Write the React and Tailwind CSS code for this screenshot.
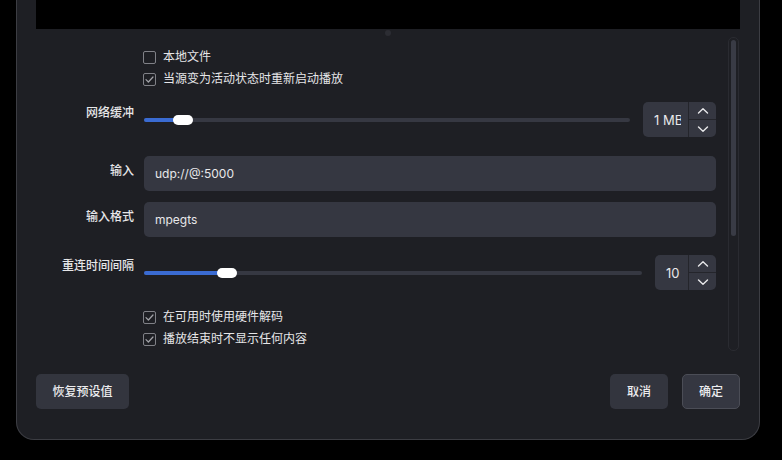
import React from 'react'

const font = { fontFamily: '"Inter", "Noto Sans CJK SC", sans-serif' }

const CheckRow = ({ checked, label }) => (
  <div className="h-[22px] flex items-center pl-[107px]">
    <div className="w-[13px] h-[13px] rounded-[2px] border border-[#808187] flex items-center justify-center">
      {checked && (
        <svg width="11" height="11" viewBox="0 0 11 11" fill="none">
          <path d="M2 5.6 L4.4 8 L9 3" stroke="#a3a4a9" strokeWidth="1.2" strokeLinecap="round" strokeLinejoin="round" />
        </svg>
      )}
    </div>
    <span className="ml-[7px] text-[12px] leading-[16px] text-[#e6e6e8]">{label}</span>
  </div>
)

const Chevron = ({ up }) => (
  <svg width="12" height="8" viewBox="0 0 12 8" fill="none">
    <path d={up ? 'M1.5 6 L6 1.8 L10.5 6' : 'M1.5 2 L6 6.2 L10.5 2'} stroke="#e8e8ea" strokeWidth="1.4" strokeLinecap="round" strokeLinejoin="round" />
  </svg>
)

const SpinBox = ({ value, width }) => (
  <div className={`${width} h-[35px] rounded-[5px] bg-[#353741] flex shrink-0`}>
    <div className="flex-1 flex items-center pl-[11px] pr-[7px] overflow-hidden">
      <div className="overflow-hidden whitespace-nowrap text-[13px] leading-[16px] text-[#e8e8ea]">{value}</div>
    </div>
    <div className="w-[28px] flex flex-col border-l border-[#24252b]">
      <div className="flex-1 flex items-center justify-center border-b border-[#24252b]"><Chevron up /></div>
      <div className="flex-1 flex items-center justify-center"><Chevron /></div>
    </div>
  </div>
)

const SliderRow = ({ label, thumb, spin, spinWidth }) => (
  <div className="flex h-[35px]">
    <div className="w-[98px] pt-[3px] text-right text-[12px] leading-[16px] text-[#e6e6e8] font-medium">{label}</div>
    <div className="ml-[10px] flex-1 flex items-center gap-[13px]">
      <div className="relative flex-1 h-[4px] rounded-full bg-[#363842]">
        <div className="absolute left-0 top-0 h-[4px] rounded-full bg-[#3a6bd2]" style={{ width: thumb + 10 }} />
        <div className="absolute top-[-3px] w-[20px] h-[10px] rounded-full bg-white" style={{ left: thumb }} />
      </div>
      <SpinBox value={spin} width={spinWidth} />
    </div>
  </div>
)

const InputRow = ({ label, value }) => (
  <div className="flex h-[35px]">
    <div className="w-[98px] pt-[7px] text-right text-[12px] leading-[16px] text-[#e6e6e8] font-medium">{label}</div>
    <div className="ml-[10px] flex-1 rounded-[5px] bg-[#353741] flex items-center px-[11px] text-[12px] text-[#e8e8ea]">{value}</div>
  </div>
)

export default function App() {
  return (
    <div className="w-[782px] h-[460px] bg-black overflow-hidden" style={font}>
      <div className="ml-4 w-[744px] h-[440px] bg-[#1e1f24] border-x border-b border-[#3c3d43] rounded-b-[18px] px-[19px] flex flex-col">
        {/* preview */}
        <div className="h-[29px] bg-black shrink-0" />
        <div className="h-[8px] flex items-center justify-center">
          <div className="w-[6px] h-[6px] rounded-full bg-[#2c2d33]" />
        </div>

        {/* scroll area */}
        <div className="flex h-[314px]">
          <div className="w-[680px] flex flex-col pt-[9px]">
            <CheckRow label="本地文件" />
            <CheckRow checked label="当源变为活动状态时重新启动播放" />
            <div className="mt-[12px]">
              <SliderRow label="网络缓冲" thumb={29} spin="1 MB" spinWidth="w-[73px]" />
            </div>
            <div className="mt-[19px]">
              <InputRow label="输入" value="udp://@:5000" />
            </div>
            <div className="mt-[11px]">
              <InputRow label="输入格式" value="mpegts" />
            </div>
            <div className="mt-[18px]">
              <SliderRow label="重连时间间隔" thumb={73} spin="10" spinWidth="w-[61px]" />
            </div>
            <div className="mt-[16px]">
              <CheckRow checked label="在可用时使用硬件解码" />
              <CheckRow checked label="播放结束时不显示任何内容" />
            </div>
          </div>
          <div className="ml-auto mr-[1px] w-[11px] rounded-[5px] border border-[#2a2b31] p-[2px]">
            <div className="h-[196px] rounded-full bg-[#393b45]" />
          </div>
        </div>

        {/* buttons */}
        <div className="mt-[23px] flex h-[35px]">
          <button className="w-[93px] rounded-[5px] bg-[#33353e] text-[12px] font-medium text-[#ececee]">恢复预设值</button>
          <button className="ml-auto w-[58px] rounded-[5px] bg-[#33353e] text-[12px] font-medium text-[#ececee]">取消</button>
          <button className="ml-[14px] w-[58px] rounded-[5px] bg-[#353741] border border-[#4b4d56] text-[12px] font-medium text-[#ececee]">确定</button>
        </div>
      </div>
    </div>
  )
}
